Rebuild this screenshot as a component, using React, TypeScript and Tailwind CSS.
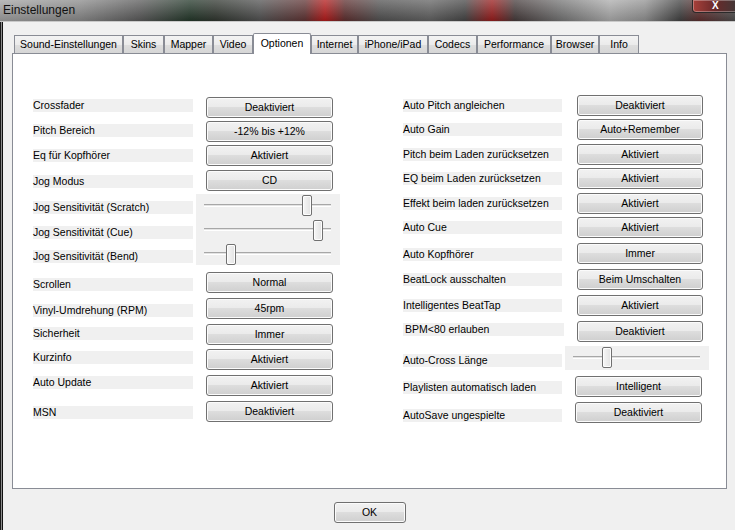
import React from "react";

type Row = {
  label: string;
  h: string;
  lt: string;
  kind: "button" | "slider";
  value?: string;
  pos?: number;
  sliderH?: string;
  thumbTop?: string;
  btn?: string;
  lbl?: string;
};

const leftRows: Row[] = [
  { label: "Crossfader", h: "h-[24px]", lt: "mt-[2px]", kind: "button", value: "Deaktiviert" },
  { label: "Pitch Bereich", h: "h-[24px]", lt: "mt-[3px]", kind: "button", value: "-12% bis +12%" },
  { label: "Eq für Kopfhörer", h: "h-[25px]", lt: "mt-[4px]", kind: "button", value: "Aktiviert" },
  { label: "Jog Modus", h: "h-[24px]", lt: "mt-[5px]", kind: "button", value: "CD" },
  { label: "Jog Sensitivität (Scratch)", h: "h-[24px]", lt: "mt-[7px]", kind: "slider", pos: 106, sliderH: "h-[24px]", thumbTop: "top-[1px]" },
  { label: "Jog Sensitivität (Cue)", h: "h-[24px]", lt: "mt-[8px]", kind: "slider", pos: 117, sliderH: "h-[24px]", thumbTop: "top-[2px]" },
  { label: "Jog Sensitivität (Bend)", h: "h-[30px]", lt: "mt-[8px]", kind: "slider", pos: 30, sliderH: "h-[23px]", thumbTop: "top-[2px]" },
  { label: "Scrollen", h: "h-[26px]", lt: "mt-[6px]", kind: "button", value: "Normal" },
  { label: "Vinyl-Umdrehung (RPM)", h: "h-[26px]", lt: "mt-[6px]", kind: "button", value: "45rpm" },
  { label: "Sicherheit", h: "h-[25px]", lt: "mt-[3px]", kind: "button", value: "Immer" },
  { label: "Kurzinfo", h: "h-[26px]", lt: "mt-[2px]", kind: "button", value: "Aktiviert" },
  { label: "Auto Update", h: "h-[26px]", lt: "mt-[1px]", kind: "button", value: "Aktiviert" },
  { label: "MSN", h: "h-[21px]", lt: "mt-[5px]", kind: "button", value: "Deaktiviert" },
];

const rightRows: Row[] = [
  { label: "Auto Pitch angleichen", h: "h-[24px]", lt: "mt-[4px]", kind: "button", value: "Deaktiviert" },
  { label: "Auto Gain", h: "h-[25px]", lt: "mt-[4px]", kind: "button", value: "Auto+Remember" },
  { label: "Pitch beim Laden zurücksetzen", h: "h-[24px]", lt: "mt-[4px]", kind: "button", value: "Aktiviert" },
  { label: "EQ beim Laden zurücksetzen", h: "h-[25px]", lt: "mt-[4px]", kind: "button", value: "Aktiviert" },
  { label: "Effekt beim laden zurücksetzen", h: "h-[24px]", lt: "mt-[4px]", kind: "button", value: "Aktiviert" },
  { label: "Auto Cue", h: "h-[26px]", lt: "mt-[4px]", kind: "button", value: "Aktiviert" },
  { label: "Auto Kopfhörer", h: "h-[26px]", lt: "mt-[5px]", kind: "button", value: "Immer" },
  { label: "BeatLock ausschalten", h: "h-[26px]", lt: "mt-[4px]", kind: "button", value: "Beim Umschalten" },
  { label: "Intelligentes BeatTap", h: "h-[26px]", lt: "mt-[4px]", kind: "button", value: "Aktiviert" },
  { label: "BPM<80 erlauben", h: "h-[25px]", lt: "mt-[2px]", kind: "button", value: "Deaktiviert", lbl: "w-[161px] pl-[2px]", btn: "ml-[13px] w-[126px]" },
  { label: "Auto-Cross Länge", h: "h-[30px]", lt: "mt-[8px]", kind: "slider", pos: 37, sliderH: "h-[24px]", thumbTop: "top-[1px]" },
  { label: "Playlisten automatisch laden", h: "h-[26px]", lt: "mt-[5px]", kind: "button", value: "Intelligent", btn: "ml-[13px] w-[127px]" },
  { label: "AutoSave ungespielte", h: "h-[21px]", lt: "mt-[7px]", kind: "button", value: "Deaktiviert", btn: "ml-[13px] w-[127px]" },
];

const tabs = [
  { name: "Sound-Einstellungen", w: "w-[109px]" },
  { name: "Skins", w: "w-[41px]" },
  { name: "Mapper", w: "w-[49px]" },
  { name: "Video", w: "w-[40px]" },
  { name: "Optionen", w: "w-[58px]", active: true },
  { name: "Internet", w: "w-[47px]" },
  { name: "iPhone/iPad", w: "w-[70px]" },
  { name: "Codecs", w: "w-[49px]" },
  { name: "Performance", w: "w-[74px]" },
  { name: "Browser", w: "w-[48px]" },
  { name: "Info", w: "w-[40px]" },
];

function WinButton({ text, className }: { text: string; className: string }) {
  return (
    <div
      className={`${className} h-[21px] rounded-[3px] border border-[#707070] bg-[linear-gradient(#f2f2f2,#ebebeb_45%,#dddddd_50%,#cfcfcf)] shadow-[inset_0_0_0_1px_#fbfbfb] flex items-center justify-center text-[10.5px] leading-none text-black`}
    >
      {text}
    </div>
  );
}

function Slider({ pos, h, thumbTop, className }: { pos: number; h: string; thumbTop: string; className: string }) {
  return (
    <div className={`${className} ${h} w-[144px] bg-[#f0f0f0] relative`}>
      <div className="absolute left-[8px] top-[10px] w-[127px] h-[3px] border-t border-[#a7a7a7] border-b border-b-white bg-[#e3e3e3]" />
      <div
        className={`absolute ${thumbTop} w-[10px] h-[21px] rounded-[2px] border border-[#707070] bg-[linear-gradient(90deg,#f6f6f6,#e2e2e2)] shadow-[inset_0_0_0_1px_#fdfdfd]`}
        style={{ left: pos }}
      />
    </div>
  );
}

function Column({ rows, side }: { rows: Row[]; side: "left" | "right" }) {
  return (
    <div className={side === "left" ? "w-[370px] flex flex-col pt-[43px]" : "flex flex-col pt-[41px]"}>
      {rows.map((r) => (
        <div key={r.label} className={`${r.h} flex items-start`}>
          <div
            className={`${r.lt} ${r.lbl ?? (side === "left" ? "w-[160px]" : "w-[159px]")} h-[13px] bg-[#f0f0f0] text-[10.5px] leading-[13px] text-black whitespace-nowrap`}
          >
            {r.label}
          </div>
          {r.kind === "button" ? (
            <WinButton
              text={r.value ?? ""}
              className={r.btn ?? (side === "left" ? "ml-[13px] w-[127px]" : "ml-[15px] w-[126px]")}
            />
          ) : (
            <Slider pos={r.pos ?? 0} h={r.sliderH ?? "h-[24px]"} thumbTop={r.thumbTop ?? "top-[1px]"} className="ml-[3px]" />
          )}
        </div>
      ))}
    </div>
  );
}

export default function App() {
  return (
    <div className="w-[735px] h-[530px] bg-[#f0f0f0] overflow-hidden flex flex-col font-['Liberation_Sans',Arial,sans-serif]">
      {/* Aero title bar */}
      <div className="relative h-[21px] shrink-0 bg-[linear-gradient(180deg,rgba(255,255,255,0.25),rgba(0,0,0,0.15)),linear-gradient(90deg,#a2a2a2_0px,#8a8a8a_80px,#5a5a5a_140px,#24382a_190px,#30362f_215px,#525252_260px,#603434_305px,#b51a1a_325px,#5e3030_345px,#525252_380px,#626262_430px,#464646_465px,#9a1c1c_492px,#463c3c_515px,#747474_560px,#acacac_610px,#929292_645px,#424242_680px,#5e2e2e_700px,#4e4e4e_735px)]">
        <span className="absolute left-[3px] top-[3px] text-[12px] leading-[14px] text-[#111111]">
          Einstellungen
        </span>
        <div className="absolute left-[692px] top-0 w-[50px] h-[13px] rounded-b-[4px] border border-t-0 border-[#2a2a2a] bg-[linear-gradient(90deg,#a8403a,#6a2a2a_45%,#3a3a3a)] shadow-[inset_0_0_0_1px_rgba(255,255,255,0.3)]">
          <span className="absolute left-[19px] top-0 text-[10px] font-bold text-white leading-[11px]">X</span>
        </div>
      </div>

      <div className="flex flex-1 border-t border-[#c9c9c9]">
        {/* window frame edge */}
        <div className="w-[3px] bg-[linear-gradient(90deg,#1a1a1a_0_1px,#8c8c8c_1px_2px,#101010_2px)]" />
        <div className="flex flex-col pl-[9px]">
          {/* tabs */}
          <div className="flex items-end h-[21px] mt-[10px] pl-[2px] relative z-10">
            {tabs.map((t) =>
              t.active ? (
                <div
                  key={t.name}
                  className={`${t.w} h-[21px] -mb-px bg-white border border-b-0 border-[#898c95] rounded-t-[2px] flex justify-center pt-[3px] text-[10.5px] leading-[13px] text-black`}
                >
                  {t.name}
                </div>
              ) : (
                <div
                  key={t.name}
                  className={`${t.w} h-[18px] border border-b-0 border-[#898c95] bg-[linear-gradient(#f3f3f3,#ebebeb_50%,#dedede_51%,#d6d6d6)] flex items-center justify-center text-[10.5px] leading-[13px] text-black`}
                >
                  {t.name}
                </div>
              )
            )}
          </div>

          {/* tab page */}
          <div className="w-[715px] h-[436px] bg-white border border-[#898c95] flex pl-[20px]">
            <Column rows={leftRows} side="left" />
            <Column rows={rightRows} side="right" />
          </div>

          <div className="w-[715px] flex justify-center mt-[13px]">
            <WinButton text="OK" className="w-[72px]" />
          </div>
        </div>
      </div>
    </div>
  );
}
